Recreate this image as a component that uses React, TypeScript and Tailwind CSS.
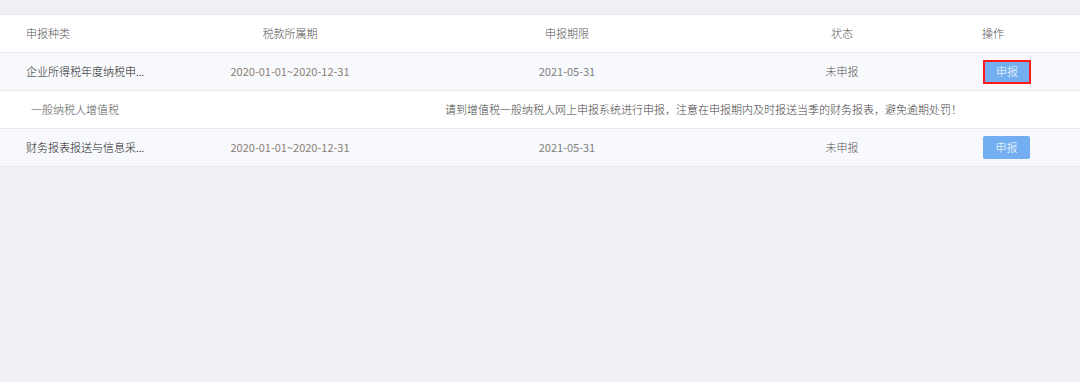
import React from "react";

const font = { fontFamily: '"Noto Sans CJK SC", "Noto Sans", sans-serif' };

function Row({ name, highlight }: { name: string; highlight?: boolean }) {
  return (
    <div className="flex h-[38px] items-center border-b border-[#e6e8ee] bg-[#f8f9fc] text-[11px] font-light">
      <div className="w-[180px] pl-[26px] text-[#222]">{name}</div>
      <div className="w-[220px] text-center font-normal text-[#8a7f76]">2020-01-01~2020-12-31</div>
      <div className="w-[334px] text-center font-normal text-[#808080]">2021-05-31</div>
      <div className="w-[216px] text-center text-[#555]">未申报</div>
      <div className="flex-1 pl-[33px]">
        <button
          className={
            highlight
              ? "flex h-[24px] w-[48px] items-center justify-center border-2 border-[#ff1a1a] bg-[#72aef0] text-[11px] font-light text-white"
              : "flex h-[23px] w-[47px] items-center justify-center rounded-[2px] bg-[#72aef0] text-[11px] font-light text-white"
          }
        >
          申报
        </button>
      </div>
    </div>
  );
}

export default function App() {
  return (
    <div className="h-[382px] w-[1080px] bg-[#f0f1f5] pt-[14px]" style={font}>
      <div className="border-t border-[#e6e8ee] bg-white">
        <div className="flex h-[38px] items-center border-b border-[#e6e8ee] bg-white text-[11px] font-light text-[#555]">
          <div className="w-[180px] pl-[26px]">申报种类</div>
          <div className="w-[220px] text-center">税款所属期</div>
          <div className="w-[334px] text-center">申报期限</div>
          <div className="w-[216px] text-center">状态</div>
          <div className="flex-1 pl-[32px]">操作</div>
        </div>
        <Row name="企业所得税年度纳税申..." highlight />
        <div className="flex h-[38px] items-center border-b border-[#e6e8ee] bg-white text-[11px] font-light text-[#444]">
          <div className="w-[180px] pl-[31px] text-[#555]">一般纳税人增值税</div>
          <div className="flex-1 pl-[265px]">
            请到增值税一般纳税人网上申报系统进行申报，注意在申报期内及时报送当季的财务报表，避免逾期处罚！
          </div>
        </div>
        <Row name="财务报表报送与信息采..." />
      </div>
    </div>
  );
}
